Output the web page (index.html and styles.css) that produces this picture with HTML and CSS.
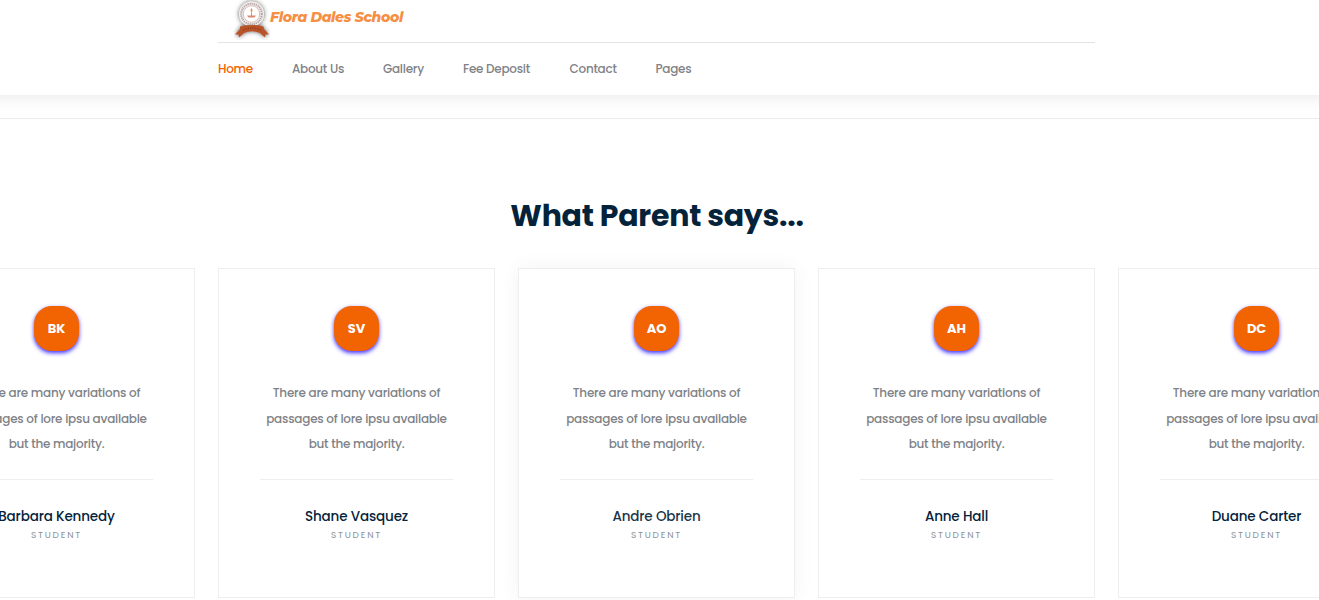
FILE: index.html
```html
<!DOCTYPE html>
<html lang="en">
<head>
<meta charset="utf-8">
<title>Flora Dales School</title>
<link rel="stylesheet" href="styles.css">
</head>
<body>
<header class="header">
  <div class="container">
    <a class="brand">
      <svg class="crest" width="36" height="40" viewBox="0 0 36 40">
        <defs><filter id="glow" x="-30%" y="-30%" width="160%" height="160%"><feDropShadow dx="0" dy="0" stdDeviation="2" flood-color="#333" flood-opacity=".8"/></filter></defs>
        <g filter="url(#glow)">
          <circle cx="17.500" cy="14" r="12.500" fill="#f3efee"/>
          <path d="M6 26.500Q18 23 29.500 26.500L30 29L35 34.500L31.500 34.500L31 37.500L26 33Q18 29.500 10 33L5 37.500L4.500 34.500L1 34.500L6 29Z" fill="#b9532c"/>
        </g>
        <circle cx="17.500" cy="14" r="10.300" fill="none" stroke="#b3a5a5" stroke-width="2" stroke-dasharray="1.300 .8"/>
        <circle cx="17.500" cy="14" r="8.200" fill="#fff" stroke="#c99690" stroke-width=".6"/>
        <path d="M17.500 8Q19.500 10.500 17.500 12.500Q15.500 10.500 17.500 8Z" fill="#f09045"/>
        <path d="M17 12.500H18V15.500H17ZM13 15.500H22L20.500 17.500H14.500Z" fill="#d98a70"/>
        <path d="M9 30Q18 26 27 30" fill="none" stroke="#94401f" stroke-width="1.500" stroke-dasharray="1.400 1"/>
      </svg>
      <span class="brand-name">Flora Dales School</span>
    </a>
    <nav class="nav">
      <a class="nav-link active">Home</a>
      <a class="nav-link about">About Us</a>
      <a class="nav-link gallery">Gallery</a>
      <a class="nav-link fee">Fee Deposit</a>
      <a class="nav-link contact">Contact</a>
      <a class="nav-link pages">Pages</a>
    </nav>
  </div>
</header>
<main class="testimonials">
  <h2 class="title">What Parent says...</h2>
  <div class="carousel">
    <article class="card"><div class="avatar">BK</div><p class="quote">There are many variations of<br>passages of lore ipsu available<br>but the majority.</p><h3 class="name">Barbara Kennedy</h3><span class="role">STUDENT</span></article>
    <article class="card"><div class="avatar">SV</div><p class="quote">There are many variations of<br>passages of lore ipsu available<br>but the majority.</p><h3 class="name">Shane Vasquez</h3><span class="role">STUDENT</span></article>
    <article class="card current"><div class="avatar">AO</div><p class="quote">There are many variations of<br>passages of lore ipsu available<br>but the majority.</p><h3 class="name">Andre Obrien</h3><span class="role">STUDENT</span></article>
    <article class="card"><div class="avatar">AH</div><p class="quote">There are many variations of<br>passages of lore ipsu available<br>but the majority.</p><h3 class="name">Anne Hall</h3><span class="role">STUDENT</span></article>
    <article class="card"><div class="avatar">DC</div><p class="quote">There are many variations of<br>passages of lore ipsu available<br>but the majority.</p><h3 class="name">Duane Carter</h3><span class="role">STUDENT</span></article>
  </div>
</main>
</body>
</html>
```

FILE: styles.css
```css
* { box-sizing: border-box; }
body { margin: 0; height: 600px; overflow: hidden; background: #fff; font-family: Poppins, Inter, sans-serif; }
.header { height: 95px; box-shadow: 0 -17px 15px 20px rgba(0, 0, 0, .08); }
.container { width: 877px; margin-left: 218px; }
.brand { display: flex; height: 43px; padding-left: 16px; border-bottom: 1px solid #e4e4e4; }
.brand-name { font: italic 800 14px/34px Montserrat, Inter, sans-serif; color: #f68f43; letter-spacing: -.35px; white-space: nowrap; }
.nav { display: flex; gap: 39px; height: 52px; align-items: center; }
.nav-link { font-size: 12px; font-weight: 500; letter-spacing: -.27px; color: #808287; white-space: nowrap; }
.nav-link.active { width: 35px; color: #f26302; }
.about { width: 52px; }
.gallery { width: 41px; }
.fee { width: 67.5px; }
.contact { width: 47px; }
.pages { width: 36px; }
.testimonials { margin-top: 23px; border-top: 1px solid #ececec; padding-top: 75px; }
.title { margin: 0 0 30px; padding-right: 5px; text-align: center; font-size: 30px; line-height: 44px; font-weight: 700; letter-spacing: -.25px; color: #04233b; }
.carousel { display: flex; gap: 23px; margin-left: -82px; }
.card { flex: 0 0 277px; height: 330px; border: 1px solid #eee; padding: 37px 41px; display: flex; flex-direction: column; align-items: center; background: #fff; }
.current { box-shadow: 0 0 20px rgba(0, 0, 0, .05); }
.current .name { color: #1b364b; }
.avatar { width: 45px; height: 45px; border-radius: 18px; background: #f26302; box-shadow: 0 2px 4px #3d2fff; color: #fff; font-size: 13px; line-height: 45px; font-weight: 700; letter-spacing: -.1px; text-align: center; }
.quote { width: 193px; height: 101px; margin: 28px 0 0; padding-top: 1px; border-bottom: 1px solid #eee; text-align: center; white-space: nowrap; font-size: 12px; line-height: 25.5px; font-weight: 500; letter-spacing: -.24px; color: #808287; }
.name { margin: 26px 0 0; font-size: 13.5px; line-height: 22px; font-weight: 500; letter-spacing: -.15px; color: #04233b; white-space: nowrap; }
.role { font-size: 9px; line-height: 14px; letter-spacing: 1.8px; color: #8b9299; }
```
